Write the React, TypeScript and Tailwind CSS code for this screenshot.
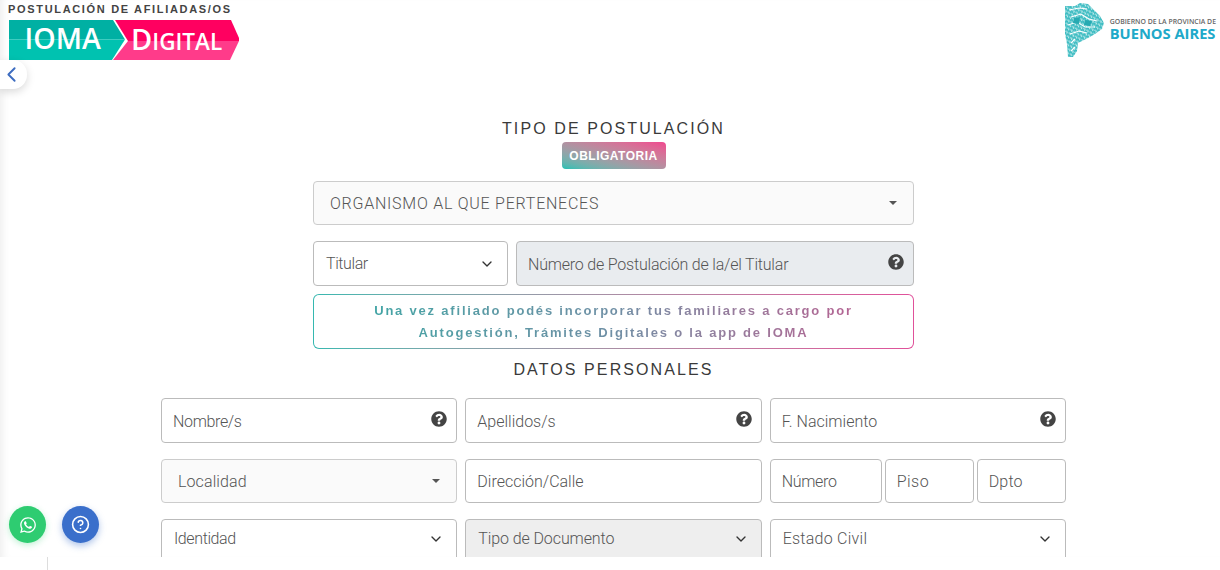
import { ChevronDown, ChevronLeft, CircleHelp } from 'lucide-react';
import { FaQuestionCircle, FaWhatsapp } from 'react-icons/fa';

const roboto = "font-['Roboto',sans-serif] font-light text-[16px] text-[#555]";

function Field({ label, help, className = '' }: { label: string; help?: boolean; className?: string }) {
  return (
    <div className={`relative flex items-center rounded border border-[#bbb] pl-[11px] pt-[2px] ${roboto} ${className}`}>
      <span>{label}</span>
      {help && <FaQuestionCircle className="absolute right-[9px] top-[12px] text-[16px] text-[#444]" />}
    </div>
  );
}

function Dropdown({ label, className = '' }: { label: string; className?: string }) {
  return (
    <div className={`flex h-[44px] items-center justify-between rounded border border-[#ccc] bg-[#fafafa] pl-[16px] ${roboto} ${className}`}>
      <span className="pt-[2px]">{label}</span>
      <span className="mr-[16px] h-0 w-0 border-x-[4px] border-t-[4px] border-x-transparent border-t-[#555]" />
    </div>
  );
}

function NativeSelect({ label, className = '' }: { label: string; className?: string }) {
  return (
    <div className={`flex h-[45px] items-center justify-between rounded border border-[#bbb] px-[12px] ${roboto} ${className}`}>
      <span>{label}</span>
      <ChevronDown size={16} strokeWidth={2} className="text-[#333]" />
    </div>
  );
}

function IomaLogo() {
  return (
    <svg width="230" height="40" viewBox="0 0 230 40" className="block">
      <polygon points="0,0 104,0 116,19.5 0,19.5" fill="#00b0a3" />
      <polygon points="0,19.5 116,19.5 103,40 0,40" fill="#00c2b0" />
      <polygon points="106,0 222,0 230,18 230,21 119,21" fill="#ff0060" />
      <polygon points="119,21 230,21 221,40 104,40" fill="#ff3b8a" />
      <text x="15.5" y="29" fontFamily="'Open Sans', sans-serif" fontWeight="600" fontSize="28.5" fill="#fff">IOMA</text>
      <text x="122" y="29.5" fontFamily="'Open Sans', sans-serif" fontWeight="600" fontSize="29" fill="#fff">
        D<tspan fontSize="22.5">IGITAL</tspan>
      </text>
    </svg>
  );
}

function BaLogo() {
  return (
    <div className="flex items-start">
      <svg width="40" height="57" viewBox="0 0 40 57" className="block">
        <defs>
          <pattern id="mapa" width="3.6" height="3.6" patternUnits="userSpaceOnUse" patternTransform="rotate(28)">
            <rect width="3.6" height="3.6" fill="#3dbcc2" />
            <path d="M0 1h2.4v1.8" fill="none" stroke="#e4f6f6" strokeWidth="0.8" />
          </pattern>
        </defs>
        <path
          d="M0 5 L10 5 L15 2 L23 3 L28 8 L35 15 L39 22 L37 28 L30 33 L23 37 L13 42 L12 50 L8 56 L3 56 L2 43 L0 33 Z"
          fill="url(#mapa)"
        />
        <path
          d="M4 9 L14 7 L22 8 M6 16 L16 13 L24 18 L32 20 M3 24 L12 21 L20 26 L30 26 M5 33 L14 30 L22 32 M6 42 L10 38 M6 50 L10 46"
          fill="none"
          stroke="#fff"
          strokeWidth="1.1"
        />
        <path d="M9 17 L15 16 L14 23 L8 22 Z M20 19 L27 20 L25 25 L19 24 Z" fill="#27aab2" />
      </svg>
      <div className="ml-[5px] mt-[16px] flex flex-col font-['Open_Sans',sans-serif]">
        <span className="whitespace-nowrap text-[6.9px] font-semibold leading-[9px] text-[#666]">GOBIERNO DE LA PROVINCIA DE</span>
        <span className="whitespace-nowrap text-[14.7px] font-bold leading-[14px] text-[#20a9c9]">BUENOS AIRES</span>
      </div>
    </div>
  );
}

export default function App() {
  return (
    <div className="relative h-[570px] w-[1220px] overflow-hidden bg-white">
      <div className="relative h-[557px] overflow-hidden shadow-[inset_8px_0_8px_-6px_rgba(0,0,0,0.08)]">
        <header className="flex justify-between pl-[8px] pr-[4px]">
          <div>
            <h1 className="mt-[2px] whitespace-nowrap font-['Liberation_Sans',sans-serif] text-[11px] font-bold leading-[14px] tracking-[1.67px] text-[#444]">
              POSTULACIÓN DE AFILIADAS/OS
            </h1>
            <div className="ml-px mt-[4px]">
              <IomaLogo />
            </div>
          </div>
          <div className="mt-px">
            <BaLogo />
          </div>
        </header>

        <main className="mt-[60px] flex flex-col items-center pl-[7px]">
          <h2 className="font-['Liberation_Sans',sans-serif] text-[16px] leading-[18px] tracking-[2.1px] text-[#3a3a3a]">TIPO DE POSTULACIÓN</h2>
          <span className="mt-[4px] flex h-[27px] w-[104px] items-center justify-center rounded bg-gradient-to-tr from-[#0cc0b4] to-[#f0468f] font-['Liberation_Sans',sans-serif] text-[12px] font-bold tracking-[0.5px] text-white">
            OBLIGATORIA
          </span>

          <div className="mt-[12px] flex w-[601px] flex-col">
            <Dropdown label="ORGANISMO AL QUE PERTENECES" className="tracking-[0.75px]" />
            <div className="mt-[16px] flex gap-2">
              <NativeSelect label="Titular" className="w-[195px] tracking-[-0.4px]" />
              <Field label="Número de Postulación de la/el Titular" help className="h-[45px] flex-1 bg-[#e9ecef] tracking-[-0.2px]" />
            </div>
            <div className="mt-[8px] rounded-[6px] bg-gradient-to-r from-[#35b8b0] to-[#e0509a] p-px">
              <p className="flex h-[53px] flex-col justify-center rounded-[5px] bg-white text-center font-['Liberation_Sans',sans-serif] text-[13px] font-bold leading-[22px] tracking-[1.8px]">
                <span className="bg-gradient-to-r from-[#2da9a5] via-[#6f8fa5] to-[#c0558f] bg-clip-text text-transparent">
                  Una vez afiliado podés incorporar tus familiares a cargo por
                  <br />
                  Autogestión, Trámites Digitales o la app de IOMA
                </span>
              </p>
            </div>
          </div>

          <h2 className="mt-[12px] font-['Liberation_Sans',sans-serif] text-[16px] leading-[18px] tracking-[2.1px] text-[#3a3a3a]">DATOS PERSONALES</h2>

          <div className="mt-[19px] grid w-[905px] grid-cols-3 gap-x-2 gap-y-4">
            <Field label="Nombre/s" help className="h-[45px] tracking-[-0.35px]" />
            <Field label="Apellidos/s" help className="h-[45px]" />
            <Field label="F. Nacimiento" help className="h-[45px]" />
            <Dropdown label="Localidad" className="tracking-[0.1px]" />
            <Field label="Dirección/Calle" className="h-[44px]" />
            <div className="flex gap-[3px]">
              <Field label="Número" className="h-[44px] w-[112px] tracking-[-0.3px]" />
              <Field label="Piso" className="h-[44px] w-[89px] tracking-[0.5px]" />
              <Field label="Dpto" className="h-[44px] w-[89px] tracking-[0.2px]" />
            </div>
            <NativeSelect label="Identidad" className="pb-[6px] tracking-[-0.4px]" />
            <NativeSelect label="Tipo de Documento" className="bg-[#eee] pb-[6px] tracking-[-0.1px]" />
            <NativeSelect label="Estado Civil" className="pb-[6px] tracking-[0.25px]" />
          </div>
        </main>

        <button className="absolute left-0 top-[60px] flex h-[29px] w-[27px] items-center rounded-r-[14px] bg-white shadow-[0_3px_8px_rgba(0,0,0,0.15)]">
          <ChevronLeft size={25} strokeWidth={1.8} className="-ml-px text-[#3d6cc0]" />
        </button>
        <button className="absolute left-[9px] top-[506px] flex h-[37px] w-[37px] items-center justify-center rounded-full bg-[#2ecc71] text-white shadow-[0_2px_6px_rgba(46,204,113,0.3)]">
          <FaWhatsapp size={18} />
        </button>
        <button className="absolute left-[62px] top-[506px] flex h-[37px] w-[37px] items-center justify-center rounded-full bg-[#3a6fcb] text-white shadow-[0_3px_7px_rgba(58,111,203,0.4)]">
          <CircleHelp size={19} strokeWidth={2} />
        </button>
      </div>
      <div className="ml-[47px] h-[13px] w-px bg-[#ddd]" />
    </div>
  );
}
